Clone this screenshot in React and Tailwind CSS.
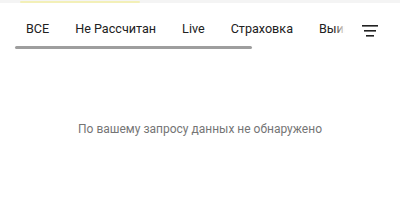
import React from 'react';

const tabs = ['ВСЕ', 'Не Рассчитан', 'Live', 'Страховка', 'Выигрыш', 'Проигрыш'];

export default function App() {
  return (
    <div className="w-[400px] h-[224px] bg-white overflow-hidden font-['Roboto',sans-serif]">
      <div className="h-[3px] bg-[#f4f4f4] relative">
        <div className="absolute left-[20px] top-[1px] w-[120px] h-[2px] rounded-full bg-[#f3f0b8]" />
      </div>

      <div className="flex items-center pt-[18px] pb-[9px] pl-[26px] pr-[22px]">
        <div className="relative flex-1 overflow-hidden">
          <div className="flex gap-[26px] whitespace-nowrap text-[12.6px] leading-[16px] text-[#212121]">
            {tabs.map((t) => (
              <span key={t}>{t}</span>
            ))}
          </div>
          <div className="absolute right-0 top-0 h-full w-[10px] bg-gradient-to-r from-transparent to-white" />
        </div>
        <svg width="16" height="12" viewBox="0 0 16 12" className="ml-[17px] mt-[3px]">
          <rect x="0" y="0" width="16" height="1.6" fill="#212121" />
          <rect x="2" y="5" width="12" height="1.6" fill="#212121" />
          <rect x="4" y="10" width="8" height="1.6" fill="#212121" />
        </svg>
      </div>

      <div className="pl-[15px]">
        <div className="w-[237px] h-[3px] rounded-full bg-[#9e9e9e]" />
      </div>

      <div className="flex justify-center pt-[71px] text-[12px] text-[#757575]">
        По вашему запросу данных не обнаружено
      </div>
    </div>
  );
}
